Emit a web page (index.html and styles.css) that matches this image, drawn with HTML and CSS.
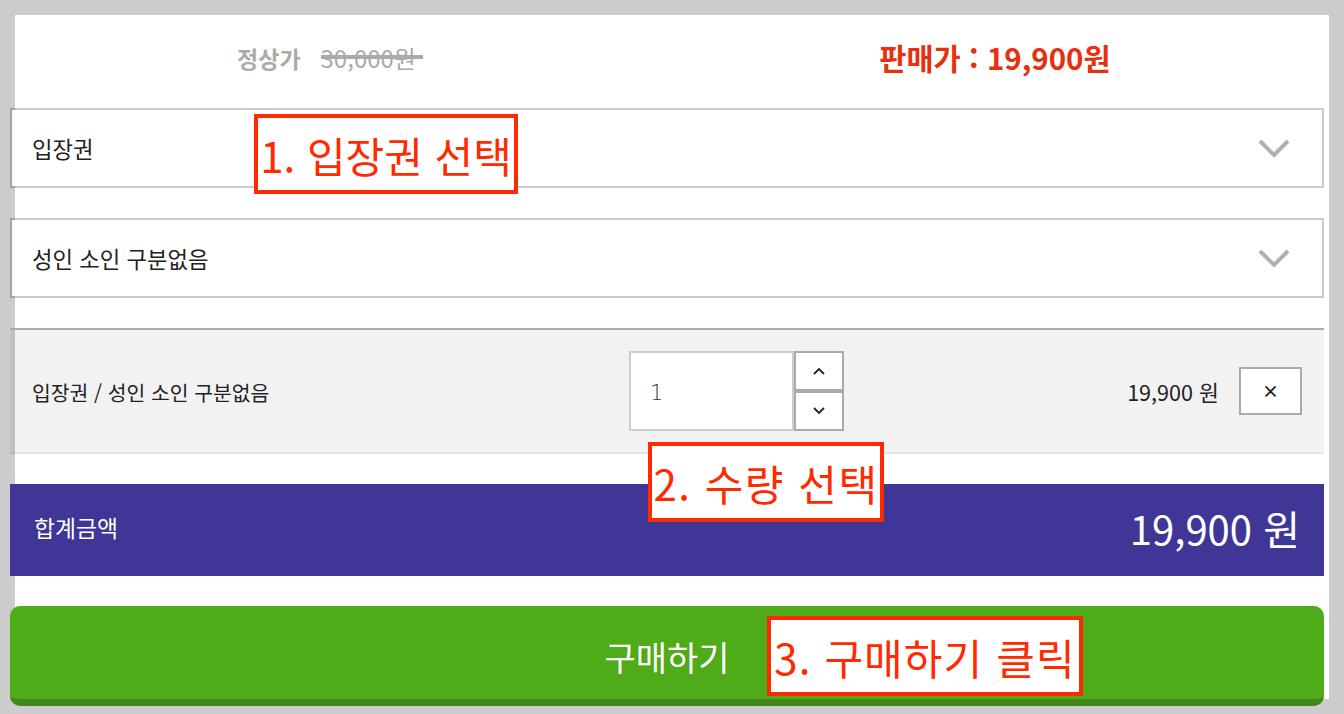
FILE: index.html

```html
<!DOCTYPE html>
<html lang="ko">
<head>
    <meta charset="UTF-8">
    <meta name="viewport" content="width=device-width, initial-scale=1.0">
    <title>구매하기</title>
    <link rel="stylesheet" href="styles.css">
</head>
<body>
    <div class="panel">
        <div class="price-row">
            <div class="price-normal">
                <span class="price-label">정상가</span>
                <span class="price-old">30,000원</span>
            </div>
            <div class="price-sale">판매가 : 19,900원</div>
        </div>

        <div class="select-box">
            <span>입장권</span>
            <svg class="chevron" width="32" height="20" viewBox="0 0 32 20"><path d="M2 3 L16 17 L30 3" /></svg>
        </div>
        <div class="select-box">
            <span>성인 소인 구분없음</span>
            <svg class="chevron" width="32" height="20" viewBox="0 0 32 20"><path d="M2 3 L16 17 L30 3" /></svg>
        </div>

        <div class="option-row">
            <div class="option-name">입장권 / 성인 소인 구분없음</div>
            <div class="qty">
                <div class="qty-input">1</div>
                <div class="qty-btns">
                    <div class="qty-btn">
                        <svg width="12" height="8" viewBox="0 0 12 8"><path d="M1 7 L6 2 L11 7" /></svg>
                    </div>
                    <div class="qty-btn">
                        <svg width="12" height="8" viewBox="0 0 12 8"><path d="M1 1 L6 6 L11 1" /></svg>
                    </div>
                </div>
            </div>
            <div class="option-right">
                <span class="option-price">19,900 원</span>
                <div class="delete-btn">×</div>
            </div>
        </div>

        <div class="total-bar">
            <span class="total-label">합계금액</span>
            <span class="total-value">19,900 원</span>
        </div>

        <div class="buy-btn">구매하기</div>

        <!-- 안내 표시 -->
        <div class="note note-1">1. 입장권 선택</div>
        <div class="note note-2">2. 수량 선택</div>
        <div class="note note-3">3. 구매하기 클릭</div>
    </div>
</body>
</html>
```

FILE: styles.css

```css
* {
    margin: 0;
    padding: 0;
    box-sizing: border-box;
}
html, body {
    height: 714px;
    overflow: hidden;
}
body {
    background: #cccccc;
    font-family: "Noto Sans CJK KR", "Noto Sans", sans-serif;
    color: #333;
    padding: 15px 15px 0;
}
.panel {
    position: relative;
    background: #fff;
    height: 684px;
}
.panel > * {
    margin-left: -5px;
    margin-right: 5px;
}
.price-row {
    display: grid;
    grid-template-columns: 640px 690px;
    align-items: center;
    height: 93px;
    padding-bottom: 8px;
    font-weight: 700;
}
.price-normal {
    display: flex;
    justify-content: center;
    align-items: center;
    gap: 20px;
    color: #aaa;
}
.price-label {
    font-size: 23px;
}
.price-old {
    position: relative;
    font-size: 24px;
    font-weight: 400;
    padding-right: 7px;
}
.price-old::after {
    content: "";
    position: absolute;
    left: 0;
    right: 0;
    top: 50%;
    height: 4px;
    margin-top: -3px;
    background: #aaa;
}
.price-sale {
    text-align: center;
    color: #e7300e;
    font-size: 29.5px;
    margin-top: -1px;
}
.select-box {
    display: flex;
    justify-content: space-between;
    align-items: center;
    height: 80px;
    margin-bottom: 30px;
    padding: 0 32px 0 20px;
    background: #fff;
    background-clip: padding-box;
    border: 2px solid rgba(0, 0, 0, 0.2);
    font-size: 22.3px;
    color: #222;
}
.chevron path {
    fill: none;
    stroke: #b0b0b0;
    stroke-width: 4;
}
.option-row {
    display: grid;
    grid-template-columns: 597px auto 1fr;
    align-items: center;
    height: 126px;
    padding: 0 22px;
    background: rgba(0, 0, 0, 0.05);
    background-clip: padding-box;
    border-top: 2px solid #aaa;
    border-bottom: 2px solid rgba(0, 0, 0, 0.1);
    margin-bottom: 30px;
}
.option-name {
    font-size: 20.4px;
    color: #222;
    padding-top: 2px;
}
.qty {
    display: flex;
    height: 80px;
}
.qty-input {
    width: 165px;
    padding-left: 19px;
    background: #fff;
    border: 2px solid #ccc;
    font-family: "DejaVu Sans", sans-serif;
    font-weight: 200;
    font-size: 21px;
    line-height: 80px;
    color: #333;
}
.qty-btns {
    display: flex;
    flex-direction: column;
}
.qty-btn {
    display: flex;
    justify-content: center;
    align-items: center;
    width: 50px;
    height: 40px;
    background: #fff;
    border: 2px solid #aaa;
}
.qty-btn path {
    fill: none;
    stroke: #222;
    stroke-width: 1.8;
}
.option-right {
    display: flex;
    justify-content: flex-end;
    align-items: center;
    gap: 20px;
}
.option-price {
    font-size: 21.6px;
    color: #222;
}
.delete-btn {
    width: 63px;
    height: 48px;
    line-height: 44px;
    text-align: center;
    background: #fff;
    border: 2px solid #aaa;
    font-size: 17px;
    font-weight: 700;
    color: #222;
}
.total-bar {
    display: flex;
    justify-content: space-between;
    align-items: center;
    height: 92px;
    margin-bottom: 30px;
    padding: 0 24px 0 24px;
    background: #3f3697;
    color: #fff;
}
.total-label {
    font-size: 22.8px;
    margin-bottom: 6px;
}
.total-value {
    font-size: 40px;
    margin-bottom: 4px;
}
.buy-btn {
    height: 100px;
    line-height: 102px;
    padding-bottom: 7px;
    text-align: center;
    background: #4fab18;
    border-bottom: 7px solid #43861a;
    border-radius: 10px;
    color: #fff;
    font-size: 34px;
}
.note {
    position: absolute;
    display: flex;
    align-items: center;
    justify-content: center;
    background: #fff;
    border: 4px solid #ff2a00;
    color: #ff2a00;
    font-size: 42px;
    white-space: nowrap;
}
.panel > .note {
    margin-left: 0;
    margin-right: 0;
}
.note-1 {
    left: 239px;
    top: 99px;
    width: 264px;
    height: 80px;
}
.note-2 {
    left: 633px;
    top: 427px;
    width: 236px;
    height: 80px;
    letter-spacing: 1.5px;
}
.note-3 {
    left: 752px;
    top: 601px;
    width: 316px;
    height: 80px;
    letter-spacing: 1.1px;
}
```
